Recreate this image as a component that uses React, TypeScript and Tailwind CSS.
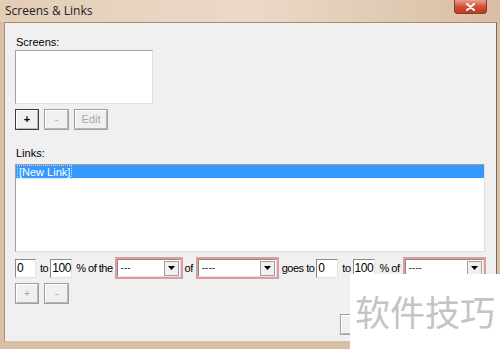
import React from "react";

const ui = { fontFamily: '"Liberation Sans", Arial, sans-serif' };

function Btn({ label, w, disabled, def }: { label: string; w: number; disabled?: boolean; def?: boolean }) {
  return (
    <div
      className={`shrink-0 h-[21px] flex items-center justify-center text-[11px] bg-[#f0f0f0] ${
        def ? "border border-[#3c3c3c]" : "border border-[#a0a0a0]"
      } ${disabled ? "text-[#a8a8a8]" : "text-black font-bold"}`}
      style={{ width: w }}
    >
      <div className="w-full h-full flex items-center justify-center border-t border-l border-white border-r border-b border-r-[#b8b8b8] border-b-[#b8b8b8]">
        {label}
      </div>
    </div>
  );
}

function Field({ v, w }: { v: string; w: number }) {
  return (
    <div
      className="shrink-0 h-[19px] bg-white border border-t-[#8a8a8a] border-l-[#8a8a8a] border-r-[#e2e2e2] border-b-[#e2e2e2] flex items-center pl-[1px] text-[12px] tracking-[-0.4px] text-black"
      style={{ width: w }}
    >
      {v}
    </div>
  );
}

function Sel({ v, w }: { v: string; w: number }) {
  return (
    <div className="shrink-0 h-[22px] border-2 border-[#e39a9a] bg-[#f6dede]" style={{ width: w }}>
      <div className="w-full h-full bg-white border border-t-[#8a8a8a] border-l-[#8a8a8a] border-r-[#e2e2e2] border-b-[#e2e2e2] flex items-center justify-between">
        <span className="pl-[3px] text-[10px] text-[#333] leading-none">{v}</span>
        <div className="w-[15px] h-[15px] mr-[1px] bg-[#f0f0f0] border border-[#a0a0a0] flex items-center justify-center">
          <svg width="7" height="4" viewBox="0 0 7 4">
            <polygon points="0,0 7,0 3.5,4" fill="#000" />
          </svg>
        </div>
      </div>
    </div>
  );
}

function T({ children, cls }: { children: React.ReactNode; cls: string }) {
  return <span className={`shrink-0 whitespace-nowrap tracking-[-0.5px] ${cls}`}>{children}</span>;
}

export default function App() {
  return (
    <div className="relative w-[500px] h-[349px] overflow-hidden bg-[#d9bfa3] flex flex-col" style={ui}>
      {/* title bar */}
      <div className="h-[22px] flex items-start justify-between bg-gradient-to-r from-[#e3cdb7] via-[#ecd9c6] to-[#d8bea4]">
        <div className="pl-[5px] pt-[2px] text-[12px] text-[#222]" style={{ fontFamily: '"Open Sans", "Liberation Sans", sans-serif' }}>
          Screens &amp; Links
        </div>
        <div className="mr-[13px] w-[33px] h-[14px] rounded-b-[4px] border border-t-0 border-[#8a3a2c] bg-gradient-to-b from-[#e8a08e] via-[#d0503a] to-[#c03a26] flex items-center justify-center">
          <svg width="9" height="8" viewBox="0 0 9 8">
            <path d="M1 1 L8 7 M8 1 L1 7" stroke="#fff" strokeWidth="2" strokeLinecap="round" />
          </svg>
        </div>
      </div>
      {/* body */}
      <div className="flex-1 flex pl-[4px] pr-[5px] pb-[7px]">
        <div className="flex-1 bg-[#f0f0f0] border-t border-l border-[#a48c78] border-r border-r-[#7a6a5c] border-b border-b-[#d0c0b0] flex flex-col px-[10px] pt-[12px] text-[11px] text-black">
          <div className="h-[14px] leading-[14px] pl-[1px]">Screens:</div>
          <div className="mt-[1px] w-[138px] h-[54px] bg-white border border-t-[#a0a0a0] border-l-[#a0a0a0] border-r-[#e0e0e0] border-b-[#e0e0e0]" />
          <div className="mt-[5px] flex gap-[5px]">
            <Btn label="+" w={24} def />
            <Btn label="-" w={25} disabled />
            <Btn label="Edit" w={34} disabled />
          </div>
          <div className="mt-[16px] h-[14px] leading-[14px] pl-[1px]">Links:</div>
          <div className="mt-[4px] w-[470px] h-[88px] bg-white border border-t-[#a0a0a0] border-l-[#a0a0a0] border-r-[#e0e0e0] border-b-[#e0e0e0]">
            <div className="h-[13px] bg-[#3399ff] flex items-center">
              <span className="ml-[1px] px-[1px] text-white text-[11px] leading-[12px] border border-dotted border-[#bcd9ff]">[New Link]</span>
            </div>
          </div>
          <div className="mt-[5px] flex items-center h-[22px] whitespace-nowrap">
            <Field v="0" w={21} />
            <T cls="ml-[4px] mr-[2px]">to</T>
            <Field v="100" w={22} />
            <T cls="ml-[4px] mr-[2px]">% of the</T>
            <Sel v="---" w={68} />
            <T cls="ml-[2px] mr-[3px]">of</T>
            <Sel v="----" w={83} />
            <T cls="ml-[3px] mr-[2px]">goes to</T>
            <Field v="0" w={22} />
            <T cls="ml-[4px] mr-[2px]">to</T>
            <Field v="100" w={22} />
            <T cls="ml-[5px] mr-[3px]">% of</T>
            <Sel v="----" w={83} />
          </div>
          <div className="mt-[4px] flex gap-[5px]">
            <Btn label="+" w={24} disabled />
            <Btn label="-" w={25} disabled />
          </div>
          <div className="mt-[10px] flex pl-[325px]">
            <Btn label="" w={60} />
          </div>
        </div>
      </div>
      {/* watermark */}
      <div className="absolute left-[350px] top-[274px] w-[150px] h-[75px] bg-white flex items-center justify-center">
        <span className="text-[35px] text-[#c4c4c4]" style={{ fontFamily: '"Noto Sans CJK SC", sans-serif' }}>
          软件技巧
        </span>
      </div>
    </div>
  );
}
